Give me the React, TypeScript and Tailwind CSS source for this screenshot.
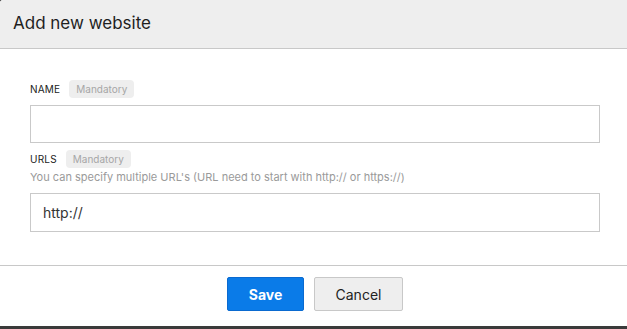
import React from "react";

function FieldLabel({ label }: { label: string }) {
  return (
    <div className="flex h-[18px] items-center gap-[9px]">
      <span className="text-[10px] uppercase tracking-[0.02em] text-[#222]">{label}</span>
      <span className="flex h-[18px] items-center rounded-[4px] bg-[#eeeeee] px-[7px] text-[10px] text-[#a6a6a6]">
        Mandatory
      </span>
    </div>
  );
}

export default function App() {
  return (
    <div
      className="flex h-[329px] w-[627px] flex-col overflow-hidden bg-[#3a3a3a]"
      style={{ fontFamily: "Inter, 'Noto Sans', sans-serif" }}
    >
      <div className="flex flex-1 flex-col overflow-hidden rounded-tl-[3px] bg-white">
        {/* Header */}
        <div className="flex h-[49px] items-center border-b border-[#c8c8c8] bg-[#eeeeee] px-[13px]">
          <h1 className="text-[17px] text-[#1e1e1e]">Add new website</h1>
        </div>

        {/* Body */}
        <div className="flex flex-col px-[30px] pt-[31px] pb-[33px] pr-[27px]">
          <FieldLabel label="Name" />
          <input
            type="text"
            className="mt-[7px] h-[38px] w-full border border-[#c9c9c9] px-[12px] text-[14px] outline-none"
          />

          <div className="mt-[7px]">
            <FieldLabel label="URLs" />
          </div>
          <p className="mt-[1px] text-[11px] leading-[16px] text-[#9a9a9a]">
            You can specify multiple URL's (URL need to start with http:// or https://)
          </p>
          <input
            type="text"
            defaultValue="http://"
            className="mt-[8px] h-[39px] w-full border border-[#c9c9c9] px-[12px] text-[14px] text-[#333] outline-none"
          />
        </div>

        {/* Footer */}
        <div className="flex flex-1 justify-center gap-[10px] border-t border-[#c8c8c8] pt-[11px]">
          <button className="ml-[3px] h-[34px] w-[77px] rounded-[2px] border border-[#0a6ad0] bg-[#0a7be8] text-[14px] font-bold text-white">
            Save
          </button>
          <button className="h-[34px] w-[89px] rounded-[2px] border border-[#c8c8c8] bg-[#eeeeee] text-[14px] text-[#222]">
            Cancel
          </button>
        </div>
      </div>
      <div className="h-[3px] shrink-0" />
    </div>
  );
}
